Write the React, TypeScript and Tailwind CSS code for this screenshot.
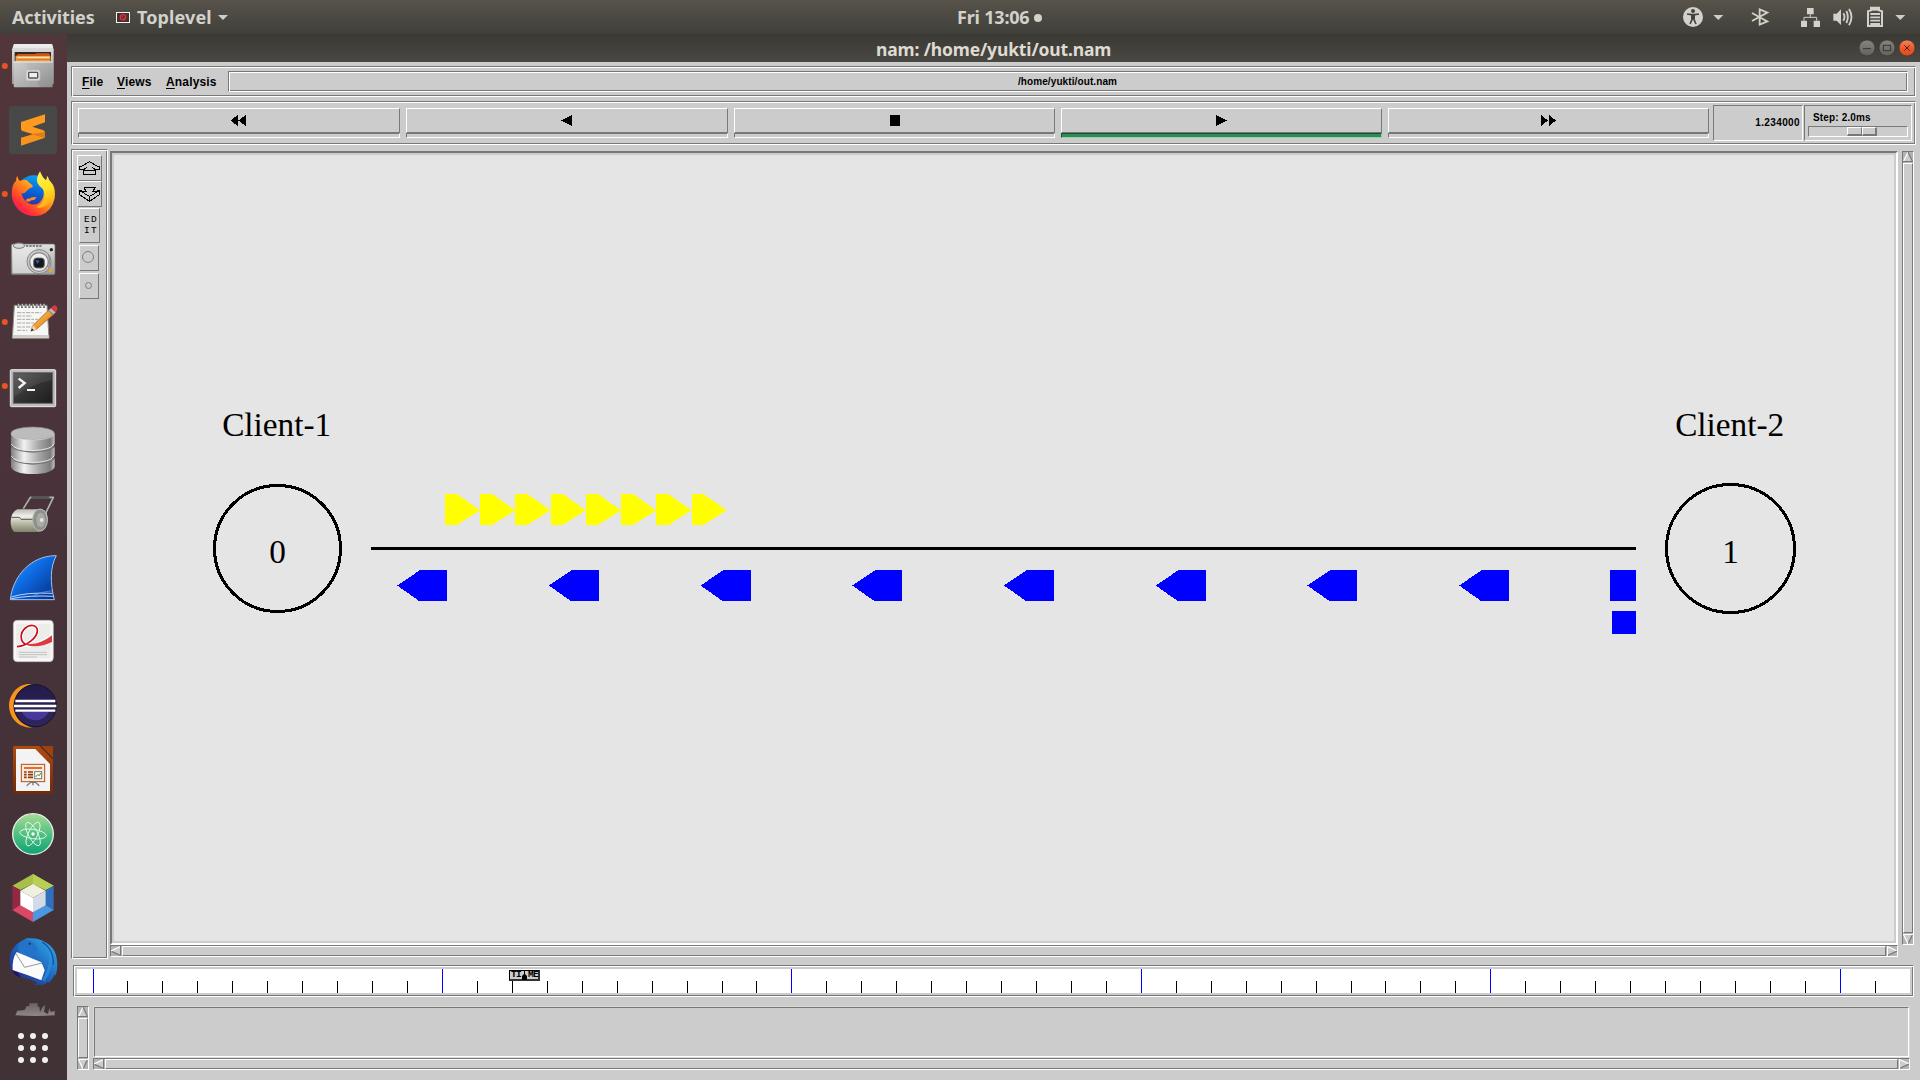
import React from "react";

type ArtProps = { box: [number, number, number, number]; className?: string; children: React.ReactNode };

/* Artwork is drawn on a grid three times finer than the screen. */
function Art({ box, className = "", children }: ArtProps) {
  return (
    <svg
      width={box[2] / 3}
      height={box[3] / 3}
      viewBox={box.join(" ")}
      className={"block shrink-0 " + className}
      fill="none"
    >
      {children}
    </svg>
  );
}

const sunken = "border border-t-[#787878] border-l-[#787878] border-b-white border-r-white";
const raised = "border border-t-white border-l-white border-b-[#787878] border-r-[#787878]";
const groove = sunken + " shadow-[inset_1px_1px_0_#fff,inset_-1px_-1px_0_#787878]";

function Grads() {
  return (
    <svg width="0" height="0" className="absolute">
      <defs>
        <linearGradient id="metal" x1="0" y1="0" x2="0" y2="1">
          <stop offset="0" stopColor="#e2e2e2" />
          <stop offset="1" stopColor="#9a9a9a" />
        </linearGradient>
        <linearGradient id="front" x1="0" y1="0" x2="1" y2="1">
          <stop offset="0" stopColor="#c9c9c9" />
          <stop offset="1" stopColor="#8d8d8d" />
        </linearGradient>
        <linearGradient id="disk" x1="0" y1="0" x2="1" y2="0">
          <stop offset="0" stopColor="#7e7e7e" />
          <stop offset="0.1" stopColor="#a8a8a8" />
          <stop offset="0.3" stopColor="#f2f2f2" />
          <stop offset="0.65" stopColor="#a4a4a4" />
          <stop offset="0.9" stopColor="#7d7d7d" />
          <stop offset="1" stopColor="#c4c4c4" />
        </linearGradient>
        <linearGradient id="fox" x1="1" y1="0" x2="0.1" y2="1">
          <stop offset="0" stopColor="#fff44f" />
          <stop offset="0.35" stopColor="#ffb31c" />
          <stop offset="0.6" stopColor="#ff6a20" />
          <stop offset="0.8" stopColor="#ff2b3c" />
          <stop offset="1" stopColor="#e1157c" />
        </linearGradient>
        <linearGradient id="foxtail" x1="0" y1="0" x2="0.3" y2="1">
          <stop offset="0" stopColor="#fff65a" />
          <stop offset="0.6" stopColor="#ffe226" />
          <stop offset="1" stopColor="#ffae1a" />
        </linearGradient>
        <linearGradient id="globe" x1="0.7" y1="0" x2="0.4" y2="1">
          <stop offset="0" stopColor="#0aa7f5" />
          <stop offset="0.55" stopColor="#0a5ad4" />
          <stop offset="1" stopColor="#45208f" />
        </linearGradient>
        <linearGradient id="term" x1="0" y1="0" x2="1" y2="1">
          <stop offset="0" stopColor="#555" />
          <stop offset="0.5" stopColor="#333" />
          <stop offset="1" stopColor="#1c1c1c" />
        </linearGradient>
        <linearGradient id="shark" x1="0" y1="0" x2="1" y2="1">
          <stop offset="0" stopColor="#2c9cff" />
          <stop offset="0.45" stopColor="#0d68e0" />
          <stop offset="1" stopColor="#052a7e" />
        </linearGradient>
        <linearGradient id="atomg" x1="0" y1="0" x2="0" y2="1">
          <stop offset="0" stopColor="#a8dd92" />
          <stop offset="0.5" stopColor="#52c083" />
          <stop offset="1" stopColor="#0da372" />
        </linearGradient>
        <linearGradient id="ecl" x1="0" y1="0" x2="0" y2="1">
          <stop offset="0" stopColor="#231c4a" />
          <stop offset="1" stopColor="#2f2560" />
        </linearGradient>
        <linearGradient id="imp" x1="0" y1="0" x2="0" y2="1">
          <stop offset="0" stopColor="#b24a0c" />
          <stop offset="1" stopColor="#6c2b08" />
        </linearGradient>
        <linearGradient id="bird" x1="1" y1="0" x2="0" y2="1">
          <stop offset="0" stopColor="#35b6ee" />
          <stop offset="0.5" stopColor="#1d64bd" />
          <stop offset="1" stopColor="#27187a" />
        </linearGradient>
        <linearGradient id="pencil" x1="0" y1="0" x2="1" y2="1">
          <stop offset="0" stopColor="#ffc35a" />
          <stop offset="1" stopColor="#dc7a16" />
        </linearGradient>
        <linearGradient id="roll" x1="0" y1="0" x2="0" y2="1">
          <stop offset="0" stopColor="#bdbdb6" />
          <stop offset="0.3" stopColor="#f0f0ec" />
          <stop offset="0.55" stopColor="#c3c4b2" />
          <stop offset="1" stopColor="#80826a" />
        </linearGradient>
        <linearGradient id="fade" x1="0" y1="0" x2="0" y2="1">
          <stop offset="0" stopColor="#6a6365" />
          <stop offset="1" stopColor="#8d8889" />
        </linearGradient>
        <linearGradient id="btn" x1="0" y1="0" x2="0" y2="1">
          <stop offset="0" stopColor="#87857e" />
          <stop offset="1" stopColor="#62605a" />
        </linearGradient>
        <linearGradient id="btnClose" x1="0" y1="0" x2="0" y2="1">
          <stop offset="0" stopColor="#f5855f" />
          <stop offset="0.5" stopColor="#ec5a2c" />
          <stop offset="1" stopColor="#de4c1b" />
        </linearGradient>
      </defs>
    </svg>
  );
}

const Dot = ({ cy }: { cy: number }) => <circle cx="14.5" cy={cy} r="9" fill="#e95420" />;

function Dock() {
  return (
    <nav className="flex w-[67px] shrink-0 flex-col bg-linear-to-b from-[#51363b] via-[#48323a] to-[#403235]">
      {/* Files */}
      <Art box={[0, 102, 201, 192]}>
        <Dot cy={198} />
        <path d="M42 132H156L161 148V252H36V148Z" fill="url(#metal)" />
        <path d="M42 132H156L159 143H39Z" fill="#ececec" />
        <rect x="44" y="156" width="109" height="30" fill="#2e2a26" />
        <path d="M54 162H104L110 160H148L151 170V186H47V168Z" fill="#d0561a" />
        <path d="M47 168H151V184H47Z" fill="#f0a040" />
        <path d="M52 172H148" stroke="#fff0d8" strokeWidth="3" />
        <path d="M50 179H150" stroke="#d87820" strokeWidth="3" />
        <rect x="41" y="184" width="117" height="78" rx="3" fill="url(#front)" />
        <path d="M41 186H158" stroke="#f1f1f1" strokeWidth="3" />
        <path d="M42 188H74L120 262H42Z" fill="#fff" opacity=".1" />
        <rect x="78" y="210" width="42" height="32" rx="6" fill="#d9d9d9" stroke="#bbb" strokeWidth="2" />
        <rect x="86" y="217" width="27" height="17" rx="2" fill="#efefef" stroke="#555" strokeWidth="4" />
      </Art>
      {/* Sublime Text */}
      <Art box={[0, 294, 201, 192]}>
        <rect x="27" y="318" width="144" height="144" rx="9" fill="#484848" />
        <path d="M63 392L135 413L63 437V413L98 403Z" fill="#f8941c" />
        <path d="M63 366L135 343V367L97 380L128 390Q135 392 135 398V413L70 394Q63 392 63 386Z" fill="#ff9a20" />
        <path d="M135 396V413L96 402Z" fill="#e07d12" />
      </Art>
      {/* Firefox */}
      <Art box={[0, 486, 201, 192]}>
        <Dot cy={582} />
        <circle cx="101" cy="578" r="52" fill="url(#globe)" />
        <path d="M52 528Q54 540 60 543Q72 537 82 541Q84 548 93 552Q100 555 98 561Q84 566 80 573Q76 582 64 580Q68 600 86 610Q104 618 118 608Q134 594 131 572Q129 558 120 545Q140 560 148 540Q168 566 164 595Q156 634 122 646Q84 654 55 629Q30 602 36 570Q38 550 48 543Q47 534 52 528Z" fill="url(#fox)" />
        <path d="M78 603Q78 594 88 596Q96 588 110 592Q104 602 94 601Q88 608 78 603Z" fill="#ff8b20" />
        <path d="M120 514Q108 532 112 548Q118 560 128 566Q138 580 131 600Q124 616 108 622Q130 626 146 612Q164 596 164 572Q162 552 148 542Q146 532 141 527Q141 536 138 541Q128 534 120 514Z" fill="url(#foxtail)" />
      </Art>
      {/* Camera */}
      <Art box={[0, 678, 201, 192]}>
        <rect x="34" y="732" width="131" height="92" rx="5" fill="url(#metal)" stroke="#6f6f6f" strokeWidth="2" />
        <rect x="38" y="737" width="70" height="82" rx="3" fill="#ececec" opacity=".65" />
        <ellipse cx="57" cy="737" rx="17" ry="8" fill="#d8d8d8" stroke="#777" strokeWidth="3" />
        <path d="M78 738H128" stroke="#666" strokeWidth="4" strokeDasharray="7 3" />
        <circle cx="117" cy="785" r="36" fill="#c9c9c9" stroke="#858585" strokeWidth="3" />
        <circle cx="117" cy="786" r="28" fill="#eee" stroke="#888" strokeWidth="4" />
        <rect x="101" y="774" width="32" height="30" rx="9" fill="#18181c" stroke="#6e6e6e" strokeWidth="3" />
        <path d="M106 780L119 782L112 792Z" fill="#2567b5" />
        <path d="M145 764Q153 782 146 802" stroke="#8b8b8b" strokeWidth="3" />
        <circle cx="154" cy="749" r="5" fill="#222" />
        <rect x="147" y="807" width="10" height="9" fill="#f0a22c" />
      </Art>
      {/* Text editor */}
      <Art box={[0, -30, 201, 192]}>
        <Dot cy={66} />
        <path d="M43 16H141L147 115H37Z" fill="#f6f6f4" stroke="#8a8a84" strokeWidth="3" />
        <path d="M38 105H146V113H38Z" fill="#cdcdc4" />
        <path d="M55 12V24M66 12V24M77 12V24M88 12V24M99 12V24M110 12V24M121 12V24M132 12V24" stroke="#6e6e6e" strokeWidth="6" />
        <path d="M56 11V20M67 11V20M78 11V20M89 11V20M100 11V20M111 11V20M122 11V20M132 11V20" stroke="#fff" strokeWidth="2" />
        <path d="M51 38H124M51 48H96M51 58H114M51 69H104M51 81H96M51 91H82" stroke="#a9a9a9" strokeWidth="3" strokeDasharray="13 3 8 3" />
        <path d="M145 31L160 44L109 88L93 93L99 76Z" fill="url(#pencil)" stroke="#9a5a14" strokeWidth="2" />
        <path d="M99 76L109 88L93 93Z" fill="#f4d9a8" />
        <path d="M96 85L101 91L92 94Z" fill="#222" />
        <path d="M145 31L153 24L167 37L160 44Z" fill="#b9b9b9" stroke="#777" strokeWidth="2" />
        <path d="M153 24Q162 11 169 18Q176 26 167 37Z" fill="#e0383a" />
      </Art>
      {/* Terminal */}
      <Art box={[0, 162, 201, 192]}>
        <Dot cy={258} />
        <rect x="31" y="209" width="136" height="111" rx="3" fill="#bdbdbd" stroke="#e8e8e8" strokeWidth="3" />
        <rect x="40" y="218" width="118" height="92" fill="url(#term)" stroke="#6b6b6b" strokeWidth="3" />
        <path d="M43 221H155V240Q90 254 43 290Z" fill="#fff" opacity=".08" />
        <path d="M56 236L74 249L56 264" stroke="#f4f4f4" strokeWidth="7" />
        <path d="M81 270H105" stroke="#f4f4f4" strokeWidth="6" />
      </Art>
      {/* Database */}
      <Art box={[0, 354, 201, 192]}>
        <path d="M33 476V500Q38 521 98 522Q158 521 164 500V476Z" fill="url(#disk)" />
        <path d="M33 473Q38 489 98 492Q160 489 163 473" stroke="#777" strokeWidth="4" />
        <path d="M33 442V466Q38 484 98 487Q158 484 164 466V442Z" fill="url(#disk)" />
        <path d="M34 468Q40 485 98 488Q156 485 162 468" stroke="#e6e6e6" strokeWidth="3" />
        <path d="M33 437Q38 453 98 456Q160 453 163 437" stroke="#777" strokeWidth="4" />
        <path d="M33 402V431Q38 449 98 452Q158 449 164 431V402Z" fill="url(#disk)" />
        <path d="M34 432Q40 449 98 452Q156 449 162 432" stroke="#e6e6e6" strokeWidth="3" />
        <ellipse cx="98" cy="400" rx="65" ry="19" fill="#bcbcbc" stroke="#8d8d8d" strokeWidth="2" />
        <path d="M34 403Q42 419 98 420Q154 419 163 403" stroke="#e4e4e4" strokeWidth="2" />
      </Art>
      {/* Paper roll */}
      <Art box={[0, 546, 201, 192]}>
        <path d="M70 626L91 592H160L130 654" stroke="#aeb1ae" strokeWidth="5" strokeLinejoin="round" />
        <path d="M94 592H148" stroke="#555" strokeWidth="8" />
        <path d="M52 628H126Q143 632 143 662Q140 694 116 696H44Q32 690 32 664Q34 636 52 628Z" fill="url(#roll)" />
        <ellipse cx="120" cy="660" rx="22" ry="33" fill="#8f908c" stroke="#b9bab6" strokeWidth="3" />
        <ellipse cx="122" cy="660" rx="13" ry="22" fill="#a9aaa7" />
        <circle cx="125" cy="660" r="6" fill="#e3e3e3" />
        <path d="M34 652H58L63 658H97" stroke="#55564c" strokeWidth="3" />
      </Art>
      {/* Wireshark */}
      <Art box={[0, 738, 201, 192]}>
        <path d="M31 899C38 830 92 766 169 767C150 800 150 850 163 899Z" fill="url(#shark)" stroke="#9cc4f0" strokeWidth="3" />
        <path d="M34 891Q80 876 158 880M34 896Q90 885 161 889" stroke="#bcd9ff" strokeWidth="3" />
        <path d="M100 887Q130 874 156 872" stroke="#6ea8ee" strokeWidth="2" />
      </Art>
      {/* Document viewer */}
      <Art box={[0, 930, 201, 192]}>
        <rect x="40" y="961" width="120" height="124" rx="12" fill="#f7f7f6" stroke="#bdbdbd" strokeWidth="2" />
        <rect x="49" y="971" width="102" height="104" rx="5" fill="#ececea" />
        <path d="M51 1040C80 1038 114 1012 112 990C110 974 90 972 76 984C60 998 58 1024 78 1034C100 1042 130 1026 156 1008" stroke="#fff" strokeWidth="11" />
        <path d="M51 1040C80 1038 114 1012 112 990C110 974 90 972 76 984C60 998 58 1024 78 1034" stroke="#c90f1e" strokeWidth="5" />
        <path d="M78 1031C100 1036 130 1026 156 1006V1026C128 1040 98 1042 78 1034Z" fill="#dc3b42" />
        <path d="M57 1057H141M57 1064H141M57 1071H111" stroke="#c2c2c2" strokeWidth="3" />
      </Art>
      {/* Eclipse */}
      <Art box={[0, -48, 201, 192]}>
        <path d="M96 -18C54 -22 28 12 27 46C28 84 54 114 96 113C64 104 42 82 40 48C42 14 62 -8 96 -18Z" fill="#f7941e" />
        <circle cx="106" cy="47" r="63" fill="url(#ecl)" stroke="#16122e" strokeWidth="3" />
        <path d="M66 66A42 36 0 0 0 146 66Z" fill="#47389a" />
        <path d="M46 33H166M42 48H169M46 62H166" stroke="#fff" strokeWidth="7" />
      </Art>
      {/* Impress */}
      <Art box={[0, 144, 201, 192]}>
        <path d="M45 168H122L159 205V306Q159 312 153 312H45Q39 312 39 306V174Q39 168 45 168Z" fill="url(#imp)" />
        <path d="M48 177H106L150 222V303H48Z" fill="#f3f3f3" />
        <path d="M122 168H159V205Z" fill="#a14008" />
        <path d="M118 168H124L159 203V209Z" fill="#4a3236" />
        <rect x="64" y="223" width="70" height="52" fill="#fbe9dc" stroke="#b4501a" strokeWidth="3" />
        <path d="M72 234H126" stroke="#e07030" strokeWidth="6" />
        <path d="M72 246H80M72 254H80M72 262H80M84 246H99M84 254H99M84 262H99" stroke="#8e3a12" strokeWidth="5" />
        <rect x="104" y="245" width="21" height="21" fill="#fff" stroke="#777" strokeWidth="3" />
        <path d="M107 261L113 254L118 257L122 249" stroke="#28a028" strokeWidth="3" />
        <path d="M80 287L92 277H106L118 287M99 277V286" stroke="#777" strokeWidth="4" />
      </Art>
      {/* Atom */}
      <Art box={[0, 336, 201, 192]}>
        <circle cx="99" cy="432" r="61" fill="url(#atomg)" stroke="#e9eeea" strokeWidth="4" />
        <g stroke="#e6faec" strokeWidth="2.6">
          <ellipse cx="99" cy="432" rx="40" ry="14" transform="rotate(8 99 432)" />
          <ellipse cx="99" cy="432" rx="39" ry="14" transform="rotate(62 99 432)" />
          <ellipse cx="99" cy="432" rx="39" ry="14" transform="rotate(116 99 432)" />
        </g>
        <circle cx="99" cy="432" r="5" fill="#fff" />
      </Art>
      {/* NetBeans */}
      <Art box={[0, 528, 201, 192]}>
        <path d="M99 552L161 587L137 600L99 581L61 600L37 587Z" fill="#a9c048" />
        <path d="M99 552L161 587L137 600L99 581Z" fill="#b9cf55" />
        <path d="M37 587L61 600V645L37 660Z" fill="#932845" />
        <path d="M161 587L137 600V645L161 660Z" fill="#2f6fbe" />
        <path d="M37 660L61 645L99 666V696Z" fill="#dc4766" />
        <path d="M161 660L137 645L99 666V696Z" fill="#4a97e2" />
        <path d="M99 581L137 602L99 623L61 602Z" fill="#eef2dc" />
        <path d="M61 602L99 623V667L61 646Z" fill="#fff" />
        <path d="M137 602L99 623V667L137 646Z" fill="#d3dce6" />
      </Art>
      {/* Thunderbird */}
      <Art box={[0, 720, 201, 192]}>
        <path d="M92 745Q80 742 72 749Q42 760 30 794Q26 818 34 842Q50 862 84 866L112 878L102 884Q114 886 124 882L122 887Q134 884 146 874L144 880Q158 870 164 852L166 858Q174 836 171 812Q168 770 128 752Q106 744 92 745Z" fill="url(#bird)" />
        <path d="M56 768Q60 752 84 750Q104 754 112 776Q112 792 96 800H66Q52 786 56 768Z" fill="#2473c8" />
        <path d="M112 752Q146 762 152 806Q152 840 130 872" stroke="#2b93dc" strokeWidth="9" opacity=".7" />
        <path d="M126 756Q162 778 160 824" stroke="#194f9e" strokeWidth="4" />
        <circle cx="89" cy="761" r="3" fill="#10285f" />
        <path d="M50 786L124 817L134 840L124 871L84 856L38 840Q36 806 50 786Z" fill="#fbfbfb" />
        <path d="M47 790L74 832L126 819" stroke="#666" strokeWidth="2" />
        <path d="M36 841Q44 860 62 862L54 848Z" fill="#26135f" />
      </Art>
      {/* Partly scrolled launcher and the applications grid */}
      <Art box={[0, 912, 201, 258]}>
        <path d="M46 976L52 962L74 960L80 948H88V940H113V950H118L120 966L128 950L136 946L132 966L144 972L148 954L152 966L164 962V976Q106 980 46 976Z" fill="url(#fade)" />
        {[1038, 1074, 1110].map((y) =>
          [63, 99, 135].map((x) => <circle key={x + "-" + y} cx={x} cy={y} r="9" fill="#f1f0ee" />)
        )}
      </Art>
    </nav>
  );
}

function TopBar() {
  return (
    <header className="flex h-[34px] shrink-0 items-center bg-linear-to-b from-[#57534b] to-[#403f3a] font-['Noto_Sans'] text-[18px] leading-[34px] font-bold text-[#d3d1cc]">
      <span className="ml-3 w-[83px] tracking-[-0.1px] whitespace-nowrap">Activities</span>
      <Art box={[330, 0, 72, 102]} className="ml-[15px]">
        <rect x="349.5" y="37.5" width="39" height="30" fill="#4c2e30" stroke="#f2f2f2" strokeWidth="3" />
        <circle cx="369" cy="52" r="8" stroke="#d8343c" strokeWidth="4" />
        <path d="M364 46L374 58" stroke="#d8343c" strokeWidth="3" />
      </Art>
      <span className="ml-[3px] w-[77px] tracking-[0.1px] whitespace-nowrap">Toplevel</span>
      <Art box={[645, 0, 48, 102]} className="ml-px">
        <path d="M654 45H684L669 60Z" fill="#cfcdc8" />
      </Art>
      <div className="ml-[726px] flex w-[90px] items-center whitespace-nowrap">
        <span className="w-[77px] tracking-[-0.2px]">Fri 13:06</span>
        <span className="mt-px size-2 rounded-full bg-[#d3d1cc]" />
      </div>
      <div className="ml-auto flex">
        <Art box={[240, 0, 180, 102]}>
          <circle cx="279" cy="51" r="30" fill="#d3d1cc" />
          <circle cx="279" cy="33" r="6" fill="#45433e" />
          <path d="M261 42L274 44H284L297 42M279 44V54M279 52L270 72M279 52L288 72" stroke="#45433e" strokeWidth="5" />
          <path d="M273 43H285V57H273Z" fill="#45433e" />
          <path d="M340 45H370L355 60Z" fill="#cfcdc8" />
        </Art>
        <Art box={[420, 0, 150, 102]}>
          <path d="M456 39L502 64L479 74V28L502 38L456 63" stroke="#d3cfc4" strokeWidth="5.5" />
        </Art>
        <Art box={[570, 0, 110, 102]}>
          <path d="M621 24H641V43H621ZM603 62H621V81H603ZM641 62H660V81H641Z" fill="#d3d1cc" />
          <path d="M631 43V52M612 62V52H650V62" stroke="#d3d1cc" strokeWidth="3" />
        </Art>
        <Art box={[680, 0, 100, 102]}>
          <path d="M699 41H709L722 28V75L709 62H699Z" fill="#d3d1cc" />
          <path d="M729 40Q736 51 729 62M738 33Q747 51 738 69M746 27Q761 51 746 76" stroke="#d3d1cc" strokeWidth="5.5" />
        </Art>
        <Art box={[780, 0, 180, 102]}>
          <path d="M804 78V34L813 31V23H837V31L846 34V78Z" stroke="#d3d1cc" strokeWidth="6" />
          <path d="M812 24H838V32H812Z" fill="#d3d1cc" />
          <path d="M811 42H840M811 52H840M811 62H840M811 72H840" stroke="#d3d1cc" strokeWidth="5.5" />
          <path d="M886 45H916L901 60Z" fill="#cfcdc8" />
        </Art>
      </div>
    </header>
  );
}

function TitleBar() {
  return (
    <div className="flex h-7 shrink-0 items-center bg-linear-to-b from-[#3a3934] to-[#4a4842]">
      <span className="mt-0.5 ml-[809px] w-[240px] font-['Noto_Sans'] text-[17.5px] leading-7 font-bold tracking-[-0.15px] whitespace-nowrap text-[#dfdbd2]">
        nam: /home/yukti/out.nam
      </span>
      <Art box={[765, 102, 195, 84]} className="ml-auto">
        <circle cx="801" cy="144" r="24" fill="url(#btn)" stroke="#34332f" strokeWidth="2" />
        <path d="M789 146H813" stroke="#383733" strokeWidth="3" />
        <circle cx="861" cy="144" r="24" fill="url(#btn)" stroke="#34332f" strokeWidth="2" />
        <rect x="850" y="136" width="22" height="16" stroke="#383733" strokeWidth="3" />
        <circle cx="921" cy="144" r="24" fill="url(#btnClose)" stroke="#34332f" strokeWidth="2" />
        <path d="M913 136L929 152M929 136L913 152" stroke="#4a2418" strokeWidth="3" />
      </Art>
    </div>
  );
}

function MenuBar() {
  return (
    <div className={groove + " ml-1 mt-1 flex h-[31px] w-[1845px] shrink-0 font-['Liberation_Sans'] font-bold text-black"}>
      <div className="mt-[7px] flex h-4 pl-[10px] text-[12px] leading-4 tracking-[0.16px] whitespace-nowrap">
        <span className="w-[35px]"><u className="underline-offset-2">F</u>ile</span>
        <span className="w-[49px]"><u className="underline-offset-2">V</u>iews</span>
        <span className="w-[62px]"><u className="underline-offset-2">A</u>nalysis</span>
      </div>
      <div className={groove + " mt-1 h-[21px] w-[1680px] pr-px text-center text-[10px] leading-[19px] tracking-[0.1px]"}>
        /home/yukti/out.nam
      </div>
    </div>
  );
}

type ButtonSpec = { width: string; on?: boolean; icon: React.ReactNode };

const controls: ButtonSpec[] = [
  { width: "w-[322px]", icon: <path d="M7 0V11L0 5.5ZM15 0V11L8 5.5Z" transform="translate(-.5 0)" /> },
  { width: "w-[322px]", icon: <path d="M13 0V11L2 5.5Z" /> },
  { width: "w-[321px]", icon: <path d="M3 0H13V11H3Z" /> },
  { width: "w-[321px]", on: true, icon: <path d="M2 0V11L13 5.5Z" /> },
  { width: "w-[321px]", icon: <path d="M0 0V11L7 5.5ZM8 0V11L15 5.5Z" /> },
];

function ControlBar() {
  return (
    <div className={groove + " ml-1 mt-1 flex h-11 w-[1845px] shrink-0 font-['Liberation_Sans'] text-[10px] font-bold text-black"}>
      <div className="ml-1.5 mt-1.5 flex gap-1.5">
        {controls.map((c, i) => (
          <div key={i} className={c.width}>
            <div className={raised + " flex h-[25px] items-center justify-center pr-px"}>
              <svg width="15" height="11" viewBox="0 0 15 11" shapeRendering="crispEdges">{c.icon}</svg>
            </div>
            <div className={c.on ? "h-[5px] border border-t-[#16532f] border-r-[#8fd6ae] border-b-[#8fd6ae] border-l-[#16532f] bg-[#2e8b57]" : sunken + " h-[5px]"} />
          </div>
        ))}
      </div>
      <div className={sunken + " ml-1 mt-[3px] h-9 w-[90px] pt-[10px] pr-0.5 text-right leading-[14px] tracking-[0.38px]"}>1.234000</div>
      <div className={sunken + " ml-px mt-[3px] h-9 w-[108px]"}>
        <div className="mt-1 ml-2 h-4 leading-[15px] tracking-[0.15px] whitespace-nowrap">Step: 2.0ms</div>
        <div className={sunken + " ml-[3px] flex h-[11px] w-[100px] pl-[38px]"}>
          <div className="h-[9px] w-[15px] border border-b-2 border-t-white border-r-[#787878] border-b-[#787878] border-l-white" />
          <div className="h-[9px] w-[15px] border border-r-2 border-b-2 border-t-white border-r-[#787878] border-b-[#787878] border-l-white" />
        </div>
      </div>
    </div>
  );
}

function Arrow({ dir }: { dir: "up" | "down" | "left" | "right" }) {
  const turn = { up: "", right: "rotate-90", down: "rotate-180", left: "-rotate-90" }[dir];
  const edges = {
    up: ["#fff", "#787878", "#787878"],
    right: ["#fff", "#787878", "#fff"],
    down: ["#787878", "#fff", "#fff"],
    left: ["#787878", "#fff", "#787878"],
  }[dir];
  return (
    <svg width="10" height="10" viewBox="0 0 10 10" className={"shrink-0 " + turn} fill="none">
      <path d="M5 0L10 10H0Z" fill="#ccc" />
      <path d="M5 0L.5 9.5" stroke={edges[0]} strokeWidth="1.2" />
      <path d="M5 0L9.5 9.5" stroke={edges[1]} strokeWidth="1.2" />
      <path d="M0 9.5H10" stroke={edges[2]} />
    </svg>
  );
}

function HScroll() {
  return (
    <div className={sunken + " flex h-3 shrink-0 gap-px bg-[#b3b3b3]"}>
      <Arrow dir="left" />
      <div className={raised + " grow bg-[#ccc]"} />
      <Arrow dir="right" />
    </div>
  );
}

function VScroll({ className }: { className: string }) {
  return (
    <div className={sunken + " flex w-3 shrink-0 flex-col gap-px bg-[#b3b3b3] " + className}>
      <Arrow dir="up" />
      <div className={raised + " grow bg-[#ccc]"} />
      <Arrow dir="down" />
    </div>
  );
}

function ToolColumn() {
  return (
    <div className={groove + " flex h-[810px] w-[37px] shrink-0 flex-col"}>
      <div className={raised + " mt-[5px] ml-[5px] h-[26px] w-[25px]"}>
        <svg width="23" height="24" viewBox="0 0 23 24" fill="none" stroke="#000" shapeRendering="crispEdges">
          <path d="M11.5 5.5L3.5 10.5H1.5V13.5H6.5L8.5 11.5M11.5 5.5L19.5 10.5H21.5V13.5H16.5L14.5 11.5M5.5 14.5H17.5V18.5H5.5ZM6.5 11.5V14M16.5 11.5V14" />
        </svg>
      </div>
      <div className={raised + " ml-[5px] h-[26px] w-[25px]"}>
        <svg width="23" height="24" viewBox="0 0 23 24" fill="none" stroke="#000" shapeRendering="crispEdges">
          <path d="M5.5 5.5H17.5M6 6L8.5 9.5H6.5L1.5 8.5V12.5L11.5 19.5L21.5 12.5V8.5L16.5 9.5H14.5L17 6M1.5 8.5L11.5 14.5L21.5 8.5M11.5 14.5V19" />
        </svg>
      </div>
      <div className={raised + " mt-px ml-[7px] flex h-[35px] w-[21px] flex-col pt-[5px] pl-1 font-['Liberation_Mono'] text-[9.5px] leading-[11px] tracking-[1.3px] text-black"}>
        <span>ED</span>
        <span>IT</span>
      </div>
      <div className={raised + " mt-0.5 ml-[7px] h-[26px] w-5"}>
        <div className="mt-[5px] ml-0.5 size-3 rounded-full border border-[#808080]" />
      </div>
      <div className={raised + " mt-0.5 ml-[7px] h-[26px] w-5"}>
        <div className="mt-2 ml-[5px] size-[7px] rounded-full border border-[#808080]" />
      </div>
    </div>
  );
}

const yellowPackets = Array.from({ length: 8 }, (_, i) => 444.9 + i * 35.23);
const bluePackets = Array.from({ length: 8 }, (_, i) => 397.2 + i * 151.7);

function Topology() {
  return (
    <div className="h-[794px] border-2 border-t-[#787878] border-r-white border-b-white border-l-[#787878]">
      <div className="h-[790px] border-2 border-[#ccc] bg-[#e5e5e5]">
        <svg width="1780" height="786" viewBox="114 155 1780 786" className="block">
          <g shapeRendering="crispEdges">
            {yellowPackets.map((x) => (
              <path key={x} d={`M${x} 494H${x + 12}L${x + 35.2} 510.3L${x + 12} 525H${x}Z`} fill="#ff0" />
            ))}
            {bluePackets.map((x) => (
              <path key={x} d={`M${x} 585.5L${x + 23} 570H${x + 50}V601H${x + 22}Z`} fill="#00f" />
            ))}
            <path d="M1610 570H1636V601H1610ZM1612 611H1636V634H1612Z" fill="#00f" />
            <path d="M371 547H1636V550H371Z" fill="#000" />
            <g fill="none" stroke="#000" strokeWidth="3">
              <circle cx="277.5" cy="548.5" r="63" />
              <circle cx="1730.5" cy="548.5" r="64" />
            </g>
          </g>
          <g className="font-['Liberation_Serif'] text-[33.3px]" fill="#000" textAnchor="middle">
            <text x="276.7" y="436">Client-1</text>
            <text x="1729.7" y="436">Client-2</text>
            <text x="277.5" y="563">0</text>
            <text x="1730.5" y="563">1</text>
          </g>
        </svg>
      </div>
    </div>
  );
}

function Timeline() {
  return (
    <div className={groove + " relative mt-1.5 ml-1.5 h-8 w-[1841px] shrink-0 p-[3px]"}>
      <svg width="1833" height="24" viewBox="77 0 1833 24" className="block bg-white" shapeRendering="crispEdges">
        {Array.from({ length: 52 }, (_, i) => (
          <rect
            key={i}
            x={Math.floor(93 + i * 34.945)}
            y={i % 10 ? 12 : 0}
            width="1"
            height={i % 10 ? 12 : 24}
            fill={i % 10 ? "#000" : "#00f"}
          />
        ))}
      </svg>
      <div className="absolute top-1 left-[435px] flex h-[11px] w-[31px] items-center justify-between border border-r-2 border-b-2 border-black border-r-[#333] border-b-[#333] bg-[#ccc] pl-px font-['Liberation_Mono'] text-[9.5px] leading-[8px] font-bold tracking-[-0.7px] text-black">
        <span>TI</span>
        <svg width="5" height="9" viewBox="0 0 5 9" className="shrink-0"><path d="M2 0H3V3L5 5V9H0V5L2 3Z" /></svg>
        <span>ME</span>
      </div>
    </div>
  );
}

export default function App() {
  return (
    <div className="flex h-[1080px] w-[1920px] flex-col overflow-hidden bg-[#ccc]">
      <Grads />
      <TopBar />
      <div className="flex h-[1046px]">
        <Dock />
        <main className="flex w-[1853px] flex-col">
          <TitleBar />
          <MenuBar />
          <ControlBar />
          <div className="mt-1 ml-1 flex h-[810px] shrink-0">
            <ToolColumn />
            <div className="mt-0.5 ml-0.5 w-[1788px] shrink-0">
              <Topology />
              <HScroll />
            </div>
            <VScroll className="mt-0.5 ml-1 h-[794px]" />
          </div>
          <Timeline />
          <div className="mt-[9px] ml-2.5 flex h-16 shrink-0">
            <VScroll className="h-16" />
            <div className="ml-1 w-[1817px]">
              <div className="h-[52px] border border-[#d9d9d9]">
                <div className={sunken + " h-[50px]"} />
              </div>
              <HScroll />
            </div>
          </div>
        </main>
      </div>
    </div>
  );
}
